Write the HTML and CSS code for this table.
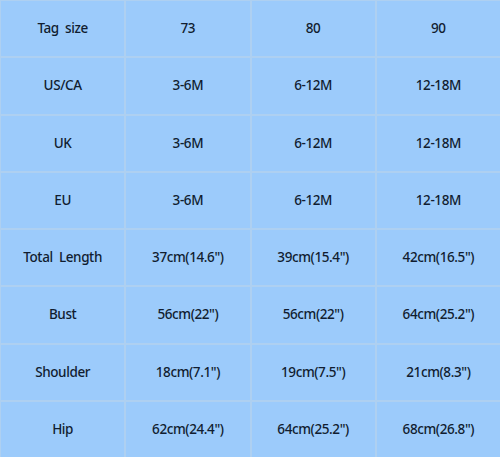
FILE: index.html
```html
<!DOCTYPE html>
<html>
<head>
<meta charset="utf-8">
<link rel="stylesheet" href="styles.css">
</head>
<body>
<div class="table">
  <div class="cell">Tag&nbsp; size</div><div class="cell">73</div><div class="cell">80</div><div class="cell">90</div>
  <div class="cell">US/CA</div><div class="cell">3-6M</div><div class="cell">6-12M</div><div class="cell">12-18M</div>
  <div class="cell">UK</div><div class="cell">3-6M</div><div class="cell">6-12M</div><div class="cell">12-18M</div>
  <div class="cell">EU</div><div class="cell">3-6M</div><div class="cell">6-12M</div><div class="cell">12-18M</div>
  <div class="cell">Total&nbsp; Length</div><div class="cell">37cm(14.6")</div><div class="cell">39cm(15.4")</div><div class="cell">42cm(16.5")</div>
  <div class="cell">Bust</div><div class="cell">56cm(22")</div><div class="cell">56cm(22")</div><div class="cell">64cm(25.2")</div>
  <div class="cell">Shoulder</div><div class="cell">18cm(7.1")</div><div class="cell">19cm(7.5")</div><div class="cell">21cm(8.3")</div>
  <div class="cell">Hip</div><div class="cell">62cm(24.4")</div><div class="cell">64cm(25.2")</div><div class="cell">68cm(26.8")</div>
</div>
</body>
</html>
```
FILE: styles.css
```css
html, body {
  margin: 0;
  padding: 0;
  width: 500px;
  height: 457px;
  overflow: hidden;
  background: #9ccbfb;
}
.table {
  box-sizing: border-box;
  width: 500px;
  height: 457px;
  display: grid;
  grid-template-columns: repeat(4, 1fr);
  grid-template-rows: repeat(8, 1fr);
  gap: 2px;
  padding: 1px 0 0 1px;
  background: #aed0f1;
}
.cell {
  background: #9ccbfb;
  display: flex;
  align-items: center;
  justify-content: center;
  font-family: "Noto Sans", "Open Sans", sans-serif;
  font-size: 13.5px;
  font-weight: 500;
  letter-spacing: -0.4px;
  color: #111d30;
  padding-bottom: 1px;
}
```
